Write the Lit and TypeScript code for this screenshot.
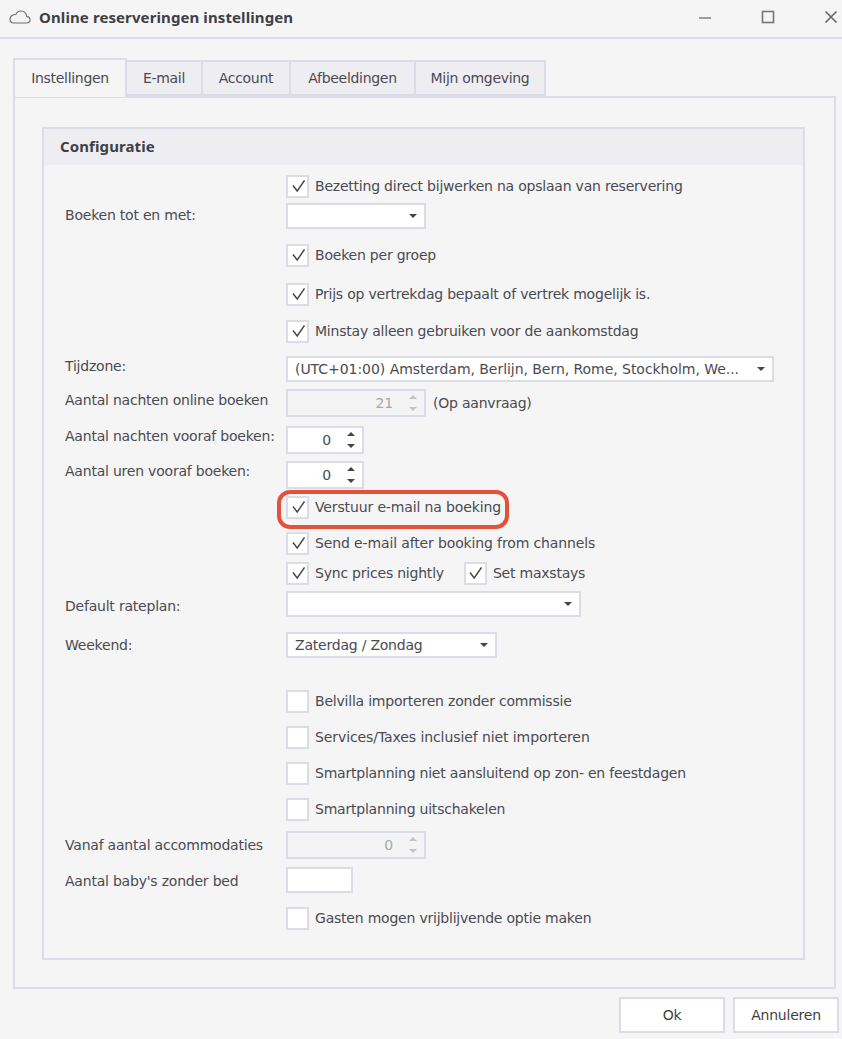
import { html, css, LitElement, nothing } from 'lit';
import { customElement } from 'lit/decorators.js';

type Row = {
  gap: number;
  label?: string;
  lift?: number;
  kind: 'check' | 'select' | 'spin' | 'input' | 'checks';
  text?: string;
  checked?: boolean;
  width?: number;
  value?: string;
  disabled?: boolean;
  note?: string;
  highlight?: boolean;
  track?: number;
};

const rows: Row[] = [
  { gap: 0, kind: 'check', checked: true, text: 'Bezetting direct bijwerken na opslaan van reservering' },
  { gap: 0, kind: 'select', label: 'Boeken tot en met:', lift: 1, width: 140, value: '' },
  { gap: 9, kind: 'check', checked: true, text: 'Boeken per groep' },
  { gap: 9, kind: 'check', checked: true, text: 'Prijs op vertrekdag bepaalt of vertrek mogelijk is.' },
  { gap: 7, kind: 'check', checked: true, text: 'Minstay alleen gebruiken voor de aankomstdag' },
  { gap: 8, kind: 'select', label: 'Tijdzone:', lift: 3, width: 488, track: -0.045, value: '(UTC+01:00) Amsterdam, Berlijn, Bern, Rome, Stockholm, We...' },
  { gap: 4, kind: 'spin', label: 'Aantal nachten online boeken', lift: 3, width: 140, value: '21', disabled: true, note: '(Op aanvraag)' },
  { gap: 7, kind: 'spin', label: 'Aantal nachten vooraf boeken:', lift: 4, width: 78, value: '0' },
  { gap: 5, kind: 'spin', label: 'Aantal uren vooraf boeken:', lift: 4, width: 78, value: '0' },
  { gap: 2, kind: 'check', checked: true, text: 'Verstuur e-mail na boeking', highlight: true, track: -0.135 },
  { gap: 6, kind: 'check', checked: true, text: 'Send e-mail after booking from channels', track: -0.135 },
  { gap: 0, kind: 'checks' },
  { gap: 1, kind: 'select', label: 'Default rateplan:', lift: -2, width: 295, value: '' },
  { gap: 11, kind: 'select', label: 'Weekend:', width: 211, value: 'Zaterdag / Zondag' },
  { gap: 26, kind: 'check', text: 'Belvilla importeren zonder commissie' },
  { gap: 6, kind: 'check', text: 'Services/Taxes inclusief niet importeren', track: -0.09 },
  { gap: 6, kind: 'check', text: 'Smartplanning niet aansluitend op zon- en feestdagen' },
  { gap: 6, kind: 'check', text: 'Smartplanning uitschakelen' },
  { gap: 6, kind: 'spin', label: 'Vanaf aantal accommodaties', width: 140, value: '0', disabled: true },
  { gap: 5, kind: 'input', label: "Aantal baby's zonder bed", lift: -1, width: 67 },
  { gap: 8, kind: 'check', text: 'Gasten mogen vrijblijvende optie maken' },
];

const tabs = [
  { label: 'Instellingen', width: 114 },
  { label: 'E-mail', width: 76 },
  { label: 'Account', width: 88 },
  { label: 'Afbeeldingen', width: 125 },
  { label: 'Mijn omgeving', width: 130 },
];

@customElement('app-root')
export class AppRoot extends LitElement {
  checkbox(text: string, checked = false) {
    return html`<label class="check">
      <span class="box">
        ${checked
          ? html`<svg width="14" height="14" viewBox="0 0 14 14"><path d="M2 6.500 6.200 12 13.500 1.500" fill="none" stroke="#444" stroke-width="1.400" /></svg>`
          : nothing}
      </span>
      <span>${text}</span>
    </label>`;
  }

  control(row: Row) {
    switch (row.kind) {
      case 'check':
        return this.checkbox(row.text!, row.checked);
      case 'checks':
        return html`<div class="pair">
          ${this.checkbox('Sync prices nightly', true)} ${this.checkbox('Set maxstays', true)}
        </div>`;
      case 'select':
        return html`<div class="field select" style="width:${row.width}px">
          <span class="value">${row.value}</span><span class="caret"></span>
        </div>`;
      case 'spin':
        return html`<div class="field spin ${row.disabled ? 'disabled' : ''}" style="width:${row.width}px">
          <span class="num">${row.value}</span>
          <span class="arrows"><i class="up"></i><i class="down"></i></span>
        </div>
        ${row.note ? html`<span class="note">${row.note}</span>` : nothing}`;
      case 'input':
        return html`<div class="field" style="width:${row.width}px"></div>`;
    }
  }

  render() {
    return html`
      <header class="titlebar">
        <svg class="cloud" width="22" height="14" viewBox="0 0 22 14">
          <path d="M5 13H17.500C19.600 13 21 11.600 21 9.800 21 8 19.600 6.700 17.800 6.600 17.300 3.400 15 1 12 1 9.500 1 7.700 2.300 6.800 4.500 3.500 4.300 1 6.500 1 9.300 1 11.500 2.800 13 5 13Z" fill="none" stroke="#6e6e6e" stroke-width="1.200" />
        </svg>
        <h1>Online reserveringen instellingen</h1>
        <div class="winbtns">
          <svg width="14" height="14" viewBox="0 0 14 14"><path d="M1 8H13" stroke="#777" stroke-width="1.400" /></svg>
          <svg width="14" height="14" viewBox="0 0 14 14"><rect x="1.500" y="1.500" width="11" height="11" fill="none" stroke="#777" stroke-width="1.600" /></svg>
          <svg width="14" height="14" viewBox="0 0 14 14"><path d="M1.500 1.500 12.500 12.500M12.500 1.500 1.500 12.500" stroke="#666" stroke-width="1.600" /></svg>
        </div>
      </header>
      <nav class="tabs">
        ${tabs.map(
          (t, i) => html`<div class="tab ${i === 0 ? 'active' : ''}" style="width:${t.width}px">${t.label}</div>`,
        )}
      </nav>
      <section class="page">
        <div class="panel">
          <h2>Configuratie</h2>
          <div class="form">
            ${rows.map(
              (r) => html`<div class="row" style="margin-top:${r.gap}px">
                <div class="label" style="margin-bottom:${(r.lift ?? 0) * 2}px">${r.label ?? ''}</div>
                <div class="ctl ${r.highlight ? 'hl' : ''}" style=${r.track ? `letter-spacing:${r.track}px` : ''}>
                  ${this.control(r)}
                </div>
              </div>`,
            )}
          </div>
        </div>
      </section>
      <footer class="buttons">
        <button>Ok</button>
        <button>Annuleren</button>
      </footer>
    `;
  }

  static styles = css`
    :host {
      display: block;
      height: 1039px;
      box-sizing: border-box;
      background: #f5f5f5;
      color: #4a4a52;
      font: 14px 'DejaVu Sans', sans-serif;
      letter-spacing: -0.215px;
      overflow: hidden;
    }
    .titlebar {
      display: flex;
      align-items: center;
      box-sizing: border-box;
      height: 39px;
      padding: 0 4px 4px 9px;
      border-bottom: 2px solid #dcdce6;
    }
    .cloud {
      margin-right: 8px;
    }
    h1 {
      flex: 1;
      margin: 0;
      font: bold 15px 'Noto Sans', sans-serif;
      letter-spacing: 0.1px;
      color: #3f3f46;
    }
    .winbtns {
      display: flex;
      gap: 49px;
    }
    .tabs {
      display: flex;
      margin: 19px 0 0 13px;
      height: 38px;
      align-items: flex-end;
    }
    .tab {
      box-sizing: border-box;
      height: 36px;
      line-height: 33px;
      text-align: center;
      letter-spacing: -0.3px;
      border: 2px solid #dcdce6;
      border-left-width: 0;
      background: #eeeef2;
    }
    .tab.active {
      height: 39px;
      line-height: 37px;
      border-left-width: 2px;
      border-bottom: 0;
      background: #f5f5f5;
      margin-bottom: -1px;
      position: relative;
      z-index: 1;
    }
    .page {
      box-sizing: border-box;
      margin: 0 6px 0 13px;
      height: 893px;
      padding: 29px 29px 27px 27px;
      border: 2px solid #dcdce6;
    }
    .panel {
      box-sizing: border-box;
      height: 833px;
      border: 2px solid #dcdce6;
    }
    h2 {
      margin: 0;
      height: 36px;
      padding-left: 16px;
      background: #eeeef2;
      font: bold 15px/35px 'Noto Sans', sans-serif;
      letter-spacing: 0.1px;
      color: #3f3f46;
    }
    .form {
      padding-top: 6px;
    }
    .row {
      display: flex;
      height: 30px;
      align-items: center;
    }
    .label {
      width: 242px;
      padding-left: 21px;
      box-sizing: border-box;
      white-space: nowrap;
    }
    .ctl {
      display: flex;
      align-items: center;
      gap: 7px;
      position: relative;
    }
    .ctl.hl::after {
      content: '';
      position: absolute;
      left: -9px;
      top: -6px;
      width: 232px;
      height: 39px;
      box-sizing: border-box;
      border: 4px solid #e5503c;
      border-radius: 13px;
    }
    .check {
      display: flex;
      align-items: center;
      gap: 6px;
      white-space: nowrap;
    }
    .box {
      box-sizing: border-box;
      width: 23px;
      height: 23px;
      background: #fff;
      border: 2px solid #dcdce6;
      display: flex;
      align-items: center;
      justify-content: center;
    }
    .pair {
      display: flex;
      gap: 20px;
    }
    .field {
      box-sizing: border-box;
      height: 26px;
      background: #fff;
      border: 2px solid #dcdce6;
      display: flex;
      align-items: center;
      white-space: nowrap;
      flex: none;
    }
    .value {
      flex: 1;
      padding-left: 7px;
      overflow: hidden;
    }
    .caret {
      width: 0;
      height: 0;
      margin: 0 7px 0 6px;
      border: 4px solid transparent;
      border-top-color: #444;
      border-bottom: 0;
    }
    .spin {
      height: 28px;
      justify-content: flex-end;
    }
    .num {
      margin-right: 16px;
    }
    .arrows {
      display: flex;
      flex-direction: column;
      gap: 8px;
      margin-right: 7px;
    }
    .arrows i {
      width: 0;
      height: 0;
      border: 4px solid transparent;
    }
    .arrows .up {
      border-top: 0;
      border-bottom-color: #444;
    }
    .arrows .down {
      border-bottom: 0;
      border-top-color: #444;
    }
    .spin.disabled {
      background: #f4f4f4;
      color: #a8a8a8;
    }
    .spin.disabled .up {
      border-bottom-color: #c4c4c4;
    }
    .spin.disabled .down {
      border-top-color: #c4c4c4;
    }
    .buttons {
      display: flex;
      justify-content: flex-end;
      gap: 8px;
      padding: 8px 3px 0 0;
    }
    button {
      box-sizing: border-box;
      width: 106px;
      height: 36px;
      background: #fff;
      border: 2px solid #dcdce6;
      font: 14px 'DejaVu Sans', sans-serif;
      letter-spacing: -0.215px;
      color: #3f3f46;
    }
  `;
}
